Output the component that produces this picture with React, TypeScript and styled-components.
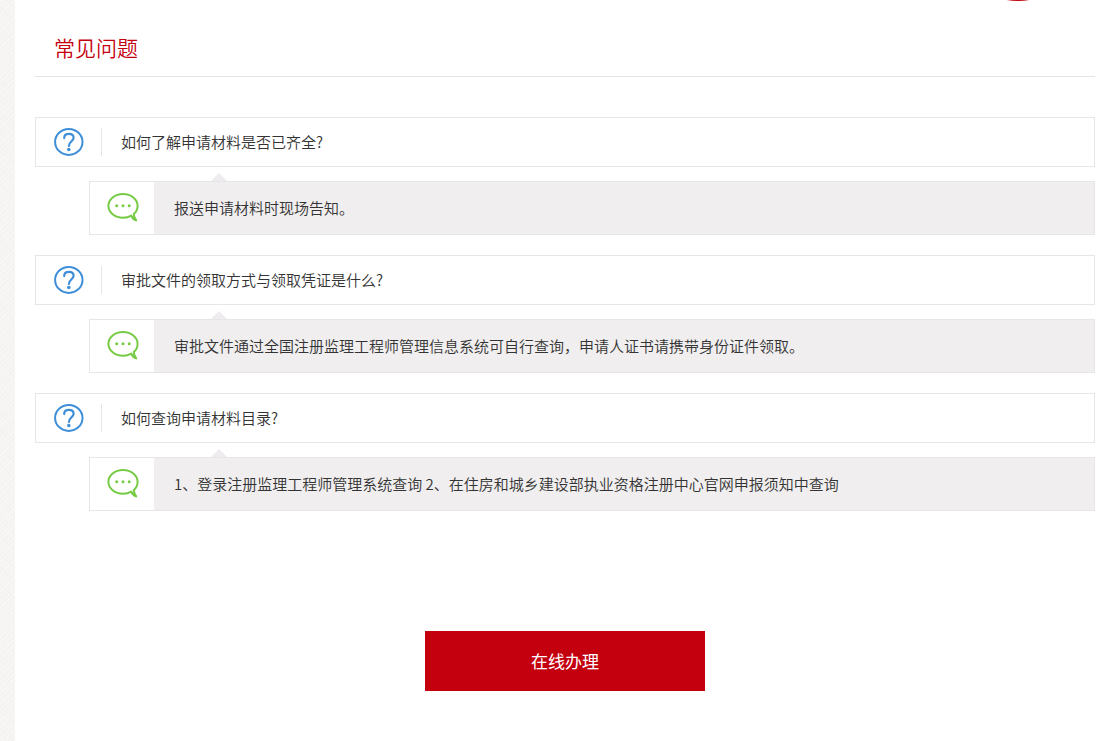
import React from 'react';
import styled, { createGlobalStyle } from 'styled-components';

const GlobalStyle = createGlobalStyle`
  * {
    box-sizing: border-box;
  }
  body {
    margin: 0;
    font-family: 'Noto Sans CJK SC', sans-serif;
    font-size: 15px;
    font-weight: 350;
    color: #333;
    background-color: #f6f5f3;
    background-image:
      repeating-linear-gradient(45deg, rgba(150, 140, 125, 0.03) 0 1px, transparent 1px 3px),
      repeating-linear-gradient(-45deg, rgba(255, 255, 255, 0.3) 0 1px, transparent 1px 4px);
  }
`;

const Page = styled.main`
  position: relative;
  min-height: 100vh;
  margin-left: 15px;
  padding: 20px 12px 50px 20px;
  background: #fff;
  overflow: hidden;
`;

const RoundBadge = styled.span`
  position: absolute;
  top: -129px;
  right: 24px;
  width: 130px;
  height: 130px;
  border-radius: 50%;
  background: #c4000f;
`;

const SectionHeader = styled.header`
  height: 57px;
  padding-left: 19px;
  border-bottom: 1px solid #e4e4e6;
`;

const Title = styled.h2`
  margin: 0;
  font-size: 21px;
  font-weight: 350;
  line-height: 54px;
  color: #c4000f;
`;

const FaqList = styled.dl`
  display: flex;
  flex-direction: column;
  gap: 20px;
  margin: 40px 0 0;
`;

const FaqItem = styled.div`
  display: flex;
  flex-direction: column;
  gap: 14px;
`;

const Question = styled.dt`
  display: flex;
  align-items: center;
  min-height: 50px;
  padding-left: 18px;
  border: 1px solid #e6e6e8;
`;

const QuestionText = styled.span`
  margin-left: 17px;
  padding-left: 19px;
  border-left: 1px solid #e6e6e8;
  line-height: 28px;
`;

const Answer = styled.dd`
  position: relative;
  display: flex;
  min-height: 54px;
  margin: 0 0 0 54px;
  border: 1px solid #e6e6e8;
  background: #f0eeef;

  &::before {
    content: '';
    position: absolute;
    left: 121px;
    bottom: calc(100% + 1px);
    border: 8px solid transparent;
    border-top-width: 0;
    border-bottom-color: #eeecee;
  }
`;

const AnswerIcon = styled.span`
  display: flex;
  flex: 0 0 64px;
  align-items: flex-start;
  padding: 10px 0 0 17px;
  background: #fff;
`;

const AnswerText = styled.span`
  padding: 12px 20px;
  line-height: 28px;
`;

const Actions = styled.div`
  display: flex;
  justify-content: center;
  margin-top: 120px;
`;

const ApplyButton = styled.button`
  width: 280px;
  height: 60px;
  padding: 0 0 2px;
  border: 0;
  background: #c4000f;
  color: #fff;
  font-family: inherit;
  font-size: 17px;
  cursor: pointer;
`;

const QuestionIcon = () => (
  <svg width="30" height="30" viewBox="0 0 30 30" fill="none" aria-hidden="true">
    <ellipse cx="14.8" cy="14.9" rx="13.7" ry="13" stroke="#3f8fd8" strokeWidth="2" />
    <path
      d="M10.2 11.1C10.2 8.3 12.1 6.9 14.9 6.9C17.7 6.9 19.6 8.4 19.6 10.8C19.6 14.2 14.9 14.4 14.9 19"
      stroke="#3f8fd8"
      strokeWidth="2.2"
      strokeLinecap="round"
    />
    <circle cx="14.8" cy="22.5" r="1.8" fill="#3f8fd8" />
  </svg>
);

const BubbleIcon = () => (
  <svg width="32" height="30" viewBox="0 0 32 30" fill="none" aria-hidden="true">
    <path
      d="M24.3 23.6C22 25 19.1 25.8 16 25.8C7.9 25.8 1.4 20.4 1.4 13.8C1.4 7.2 7.9 2 16 2C24.1 2 30.6 7.2 30.6 13.8C30.6 17.1 29.2 20 26.8 22.1C26.9 24.3 27.5 26 29.2 28.4C26.9 27.8 25.2 26 24.3 23.6Z"
      stroke="#76cb45"
      strokeWidth="2"
      strokeLinejoin="round"
    />
    <g fill="#76cb45">
      <circle cx="9.7" cy="13.8" r="1.5" />
      <circle cx="16" cy="13.8" r="1.5" />
      <circle cx="22.2" cy="13.8" r="1.5" />
    </g>
  </svg>
);

const faqs = [
  { question: '如何了解申请材料是否已齐全?', answer: '报送申请材料时现场告知。' },
  {
    question: '审批文件的领取方式与领取凭证是什么?',
    answer: '审批文件通过全国注册监理工程师管理信息系统可自行查询\uFF0C申请人证书请携带身份证件领取。',
  },
  {
    question: '如何查询申请材料目录?',
    answer: '1、登录注册监理工程师管理系统查询 2、在住房和城乡建设部执业资格注册中心官网申报须知中查询',
  },
];

export default function App() {
  return (
    <>
      <GlobalStyle />
      <Page lang="zh-CN">
        <RoundBadge aria-hidden="true" />
        <SectionHeader>
          <Title>常见问题</Title>
        </SectionHeader>
        <FaqList>
          {faqs.map(({ question, answer }) => (
            <FaqItem key={question}>
              <Question>
                <QuestionIcon />
                <QuestionText>{question}</QuestionText>
              </Question>
              <Answer>
                <AnswerIcon>
                  <BubbleIcon />
                </AnswerIcon>
                <AnswerText>{answer}</AnswerText>
              </Answer>
            </FaqItem>
          ))}
        </FaqList>
        <Actions>
          <ApplyButton type="button">在线办理</ApplyButton>
        </Actions>
      </Page>
    </>
  );
}
